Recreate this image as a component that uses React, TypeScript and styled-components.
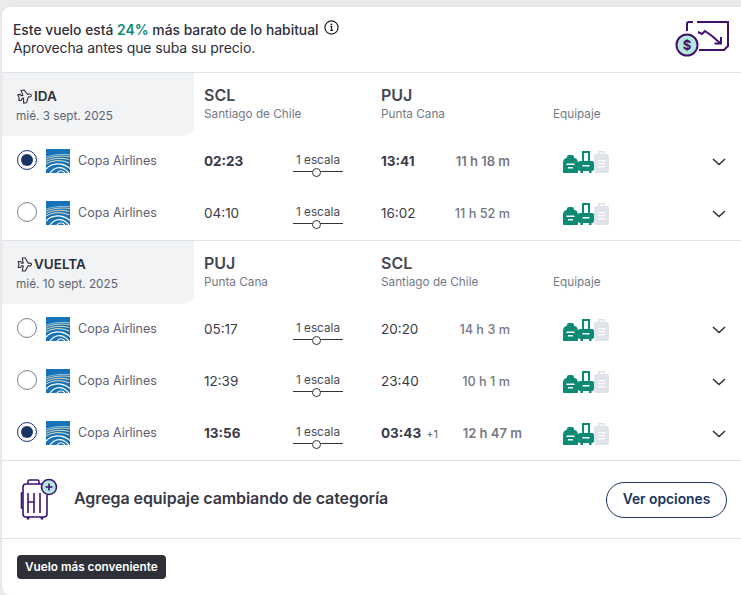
import React from "react";
import styled, { createGlobalStyle } from "styled-components";

const GlobalStyle = createGlobalStyle`
  html, body {
    margin: 0;
    padding: 0;
    background: #ebebeb;
    font-family: Inter, "Noto Sans", "Liberation Sans", sans-serif;
    color: #2d2e3a;
  }
  * { box-sizing: border-box; }
`;

const Page = styled.div`
  width: 741px;
  height: 595px;
  padding: 6px 0 0 1px;
  overflow: hidden;
`;

const Card = styled.div`
  background: #fff;
  height: 589px;
  border-radius: 8px 0 0 8px;
  border-top: 1px solid #e1e4ea;
  border-left: 1px solid #e1e4ea;
`;

const Banner = styled.div`
  height: 66px;
  display: flex;
  justify-content: space-between;
  padding: 14px 12px 0 11px;
  border-bottom: 1px solid #dfe3e9;
`;

const BannerTitle = styled.div`
  display: flex;
  align-items: flex-start;
  gap: 5px;
  font-size: 13.85px;
  line-height: 18px;
  font-weight: 500;
`;

const InfoSlot = styled.span`
  display: flex;
  margin-top: -1px;
`;

const Accent = styled.span`
  color: #0b8a75;
  font-weight: 600;
`;

const BannerSub = styled.div`
  font-size: 14px;
  line-height: 18px;
  letter-spacing: -0.1px;
`;

const Section = styled.section`
  border-bottom: 1px solid #dfe3e9;
`;

const Head = styled.div`
  display: flex;
  height: 63px;
`;

const Tab = styled.div`
  width: 192px;
  background: #f2f3f5;
  border-bottom-right-radius: 10px;
  padding: 14px 0 0 14px;
`;

const TabTitle = styled.div`
  display: flex;
  align-items: center;
  gap: 2px;
  margin-left: 1px;
  font-size: 13.5px;
  line-height: 18px;
  font-weight: 600;
`;

const TabDate = styled.div`
  margin-top: 3px;
  font-size: 11.75px;
  line-height: 16px;
  color: #5f6270;
`;

const Place = styled.div<{ $width: number; $inset?: number }>`
  width: ${(p) => p.$width}px;
  padding: 13px 0 0 ${(p) => p.$inset ?? 0}px;
`;

const Code = styled.div`
  font-size: 16px;
  line-height: 19px;
  font-weight: 600;
  color: #464753;
`;

const City = styled.div`
  margin-top: 1px;
  font-size: 11.75px;
  line-height: 16px;
  color: #757885;
`;

const Row = styled.div`
  display: flex;
  align-items: center;
  height: 52px;
  padding: 0 0 2px 15px;
`;

const Radio = styled.span<{ $checked?: boolean }>`
  width: 20px;
  height: 20px;
  margin-top: -2px;
  border-radius: 50%;
  border: 1px solid ${(p) => (p.$checked ? "#1b3361" : "#7d808c")};
  display: flex;
  align-items: center;
  justify-content: center;
  flex: none;
  &::after {
    content: "";
    display: ${(p) => (p.$checked ? "block" : "none")};
    width: 12px;
    height: 12px;
    border-radius: 50%;
    background: #1b3361;
  }
`;

const Carrier = styled.div`
  width: 167px;
  display: flex;
  align-items: center;
  gap: 8px;
  padding-left: 9px;
  font-size: 12.5px;
  color: #5f6270;
`;

const CarrierName = styled.span`
  margin-top: -2px;
`;

const Time = styled.div<{ $strong?: boolean }>`
  font-size: 13.5px;
  font-weight: ${(p) => (p.$strong ? 700 : 400)};
  color: #3a3b47;
`;

const DepartCell = styled.div`
  width: 89px;
`;

const Stops = styled.div`
  width: 88px;
  margin-top: 6px;
`;

const StopsLabel = styled.div`
  width: 50px;
  text-align: center;
  font-size: 11.75px;
  line-height: 14px;
  color: #4a4b57;
`;

const StopsLine = styled.div`
  width: 50px;
  height: 7px;
  margin-top: 1px;
  position: relative;
  &::before {
    content: "";
    position: absolute;
    left: 0;
    right: 0;
    top: 3px;
    height: 1px;
    background: #33343f;
  }
  &::after {
    content: "";
    position: absolute;
    left: 19px;
    top: 0;
    width: 7px;
    height: 7px;
    border-radius: 50%;
    background: #fff;
    border: 1px solid #33343f;
  }
`;

const ArriveCell = styled.div<{ $width: number }>`
  width: ${(p) => p.$width}px;
  display: flex;
  align-items: baseline;
`;

const DayShift = styled.span`
  margin-left: 5px;
  font-size: 11px;
  color: #5f6270;
`;

const Duration = styled.span<{ $strong?: boolean }>`
  margin-left: auto;
  font-size: ${(p) => (p.$strong ? 13 : 12.7)}px;
  font-weight: ${(p) => (p.$strong ? 600 : 500)};
  color: #757885;
`;

const Bags = styled.div<{ $offset: number }>`
  margin: 2px 0 0 ${(p) => p.$offset}px;
  width: 163px;
  height: 22px;
  display: flex;
  align-items: flex-end;
  color: #0b8a75;
`;

const ChevronSlot = styled.span`
  margin-left: auto;
  align-self: center;
  display: flex;
`;

const Upsell = styled.div`
  height: 78px;
  display: flex;
  align-items: center;
  padding: 0 14px 0 18px;
  border-bottom: 1px solid #dfe3e9;
`;

const UpsellText = styled.div`
  flex: 1;
  margin: 0 0 4px 16px;
  font-size: 16px;
  letter-spacing: -0.08px;
  font-weight: 600;
  color: #383945;
`;

const OutlineButton = styled.button`
  width: 121px;
  height: 36px;
  padding: 0 0 2px;
  border-radius: 18px;
  border: 1px solid #1b3361;
  background: #fff;
  color: #1b3361;
  font-family: inherit;
  font-size: 13.8px;
  font-weight: 600;
`;

const Footer = styled.div`
  padding: 16px 15px 0;
`;

const Tag = styled.span`
  display: inline-block;
  height: 24px;
  padding: 0 8px;
  border-radius: 4px;
  background: #2f3037;
  color: #fff;
  font-size: 11.75px;
  line-height: 24px;
  font-weight: 600;
`;

const PlaneSvg = styled.svg<{ $tilt: number }>`
  flex: none;
  transform: rotate(${(p) => p.$tilt}deg);
`;

const LogoSvg = styled.svg`
  flex: none;
`;

function InfoIcon() {
  return (
    <svg width="15" height="15" viewBox="0 0 15 15" fill="none" stroke="#1f2030">
      <circle cx="7.5" cy="7.5" r="6.6" strokeWidth="1.2" />
      <path d="M6.3 6.6h1.3v3.6M6.2 10.4h2.8" strokeWidth="1.2" />
      <circle cx="7.4" cy="4.4" r="0.9" fill="#1f2030" stroke="none" />
    </svg>
  );
}

function PlaneIcon({ tilt }: { tilt: number }) {
  return (
    <PlaneSvg
      $tilt={tilt}
      width="15"
      height="15"
      viewBox="0 0 15 15"
      fill="none"
      stroke="#2d2e3a"
      strokeWidth="1.1"
      strokeLinejoin="round"
    >
      <path d="M1.2 4.500h2.300l1.200 1.600h1.500L5.300 1h3L11 6.100h1.800c1 0 1.700.6 1.700 1.400s-.7 1.400-1.700 1.400H11L8.300 14h-3l.9-5.100H4.700l-1.200 1.600H1.200l.8-3z" />
    </PlaneSvg>
  );
}

function PriceDropIcon() {
  return (
    <svg width="54" height="36" viewBox="0 0 54 36" fill="none">
      <path
        d="M12 10V3C12 2 13 1 14 1h4M22 1h31v24l-4 4H24"
        stroke="#43106b"
        strokeWidth="2"
      />
      <path d="M23 11l4 2 3-3 7 5 8 7" stroke="#43106b" strokeWidth="2" />
      <path d="M46 16v6.500h-6.500" stroke="#43106b" strokeWidth="2" />
      <circle cx="12" cy="24" r="10.500" fill="#b2e8dd" stroke="#43106b" strokeWidth="2" />
      <text
        x="12"
        y="28.500"
        textAnchor="middle"
        fontSize="13"
        fontWeight="700"
        fill="#43106b"
        fontFamily="Inter, sans-serif"
      >
        $
      </text>
    </svg>
  );
}

function CopaLogo() {
  return (
    <LogoSvg width="24" height="24" viewBox="0 0 24 24">
      <rect width="24" height="24" fill="#1773b8" />
      <g fill="none" strokeWidth="1">
        <path d="M0 8C8 5.500 16 5 24 5.500" stroke="#8fbcd3" />
        <path d="M0 10C8 7 16 6.500 24 7.500" stroke="#c9d3c4" />
        <path d="M0 12.500C7 9 15 8.500 23 10.500" stroke="#e6d9b4" />
        <path d="M0 15C7 11 15 10.500 23 14" stroke="#e9e2c8" />
        <path d="M0 20C6 13.500 16 13 24 19.500" stroke="#fff" strokeWidth="1.200" />
        <path d="M4 24C9 17 17 16.500 23 24" stroke="#fff" strokeWidth="1.200" />
        <path d="M11 24C13 21 17 21 19 24" stroke="#fff" strokeWidth="1.200" />
      </g>
    </LogoSvg>
  );
}

function Backpack() {
  return (
    <svg width="15" height="18" viewBox="0 0 15 18" fill="currentColor">
      <path d="M0 17V8C0 4.500 2.500 3 4 2.800V2C4 .9 4.900 0 6 0h3c1.100 0 2 .9 2 2v.8c1.500.2 4 1.700 4 5.200v9c0 .6-.4 1-1 1H1c-.6 0-1-.4-1-1z" />
      <path d="M3.500 8.500h8V10h-8zM5 12h5v1.500H5z" fill="#fff" />
    </svg>
  );
}

function Trolley() {
  return (
    <svg width="16" height="22" viewBox="0 0 16 22" fill="currentColor">
      <path d="M4 0h8v10h-2V2H6v8H4z" />
      <path d="M2 10h12c1.100 0 2 .9 2 2v6c0 1.100-.9 2-2 2h-.5v2H11v-2H5v2H2.500v-2H2c-1.100 0-2-.9-2-2v-6c0-1.100.9-2 2-2z" />
      <path d="M4.500 14h7v1.500h-7z" fill="#fff" />
    </svg>
  );
}

function Suitcase() {
  return (
    <svg width="15" height="22" viewBox="0 0 15 22" fill="#e0e3e9">
      <path d="M4 0h7v3h2c1.100 0 2 .9 2 2v15c0 1.100-.9 2-2 2H2c-1.100 0-2-.9-2-2V5c0-1.100.9-2 2-2h2zm1.500 1.500V3h4V1.500z" />
      <path d="M4 9h7v1.200H4zM4 12h7v1.200H4zM4 15h7v1.200H4z" fill="#fff" />
    </svg>
  );
}

function Chevron() {
  return (
    <svg width="14" height="8" viewBox="0 0 14 8" fill="none" stroke="#2b2c38" strokeWidth="1.500">
      <path d="M1 1l6 5.500L13 1" />
    </svg>
  );
}

function LuggagePlus() {
  return (
    <svg width="38" height="44" viewBox="0 0 38 44" fill="none" stroke="#3c1272" strokeWidth="1.600">
      <path d="M8 6V3.500C8 2.500 8.600 2 9.500 2h8c.9 0 1.500.5 1.500 1.500V6" />
      <path d="M22 6H6C4 6 3 7 3 9v27c0 2 1 3 3 3h18c2 0 3-1 3-3V17" />
      <path d="M3 15H1.500v15H3M8 15v20M14 15v20M20 15v20M8 24h6" />
      <path d="M8 39v2.500M22 39v2.500" strokeWidth="2.600" />
      <circle cx="29" cy="9" r="7.500" fill="#b2e8dd" />
      <path d="M29 5.500v7M25.500 9h7" />
    </svg>
  );
}

type Flight = {
  depart: string;
  arrive: string;
  duration: string;
  selected?: boolean;
  dayShift?: string;
};

const outbound: Flight[] = [
  { depart: "02:23", arrive: "13:41", duration: "11 h 18 m", selected: true },
  { depart: "04:10", arrive: "16:02", duration: "11 h 52 m" },
];

const inbound: Flight[] = [
  { depart: "05:17", arrive: "20:20", duration: "14 h 3 m" },
  { depart: "12:39", arrive: "23:40", duration: "10 h 1 m" },
  { depart: "13:56", arrive: "03:43", duration: "12 h 47 m", selected: true, dayShift: "+1" },
];

function FlightRow({ flight }: { flight: Flight }) {
  const wide = Boolean(flight.dayShift);
  return (
    <Row>
      <Radio $checked={flight.selected} />
      <Carrier>
        <CopaLogo />
        <CarrierName>Copa Airlines</CarrierName>
      </Carrier>
      <DepartCell>
        <Time $strong={flight.selected}>{flight.depart}</Time>
      </DepartCell>
      <Stops>
        <StopsLabel>1 escala</StopsLabel>
        <StopsLine />
      </Stops>
      <ArriveCell $width={wide ? 141 : 129}>
        <Time $strong={flight.selected}>{flight.arrive}</Time>
        {flight.dayShift && <DayShift>{flight.dayShift}</DayShift>}
        <Duration $strong={flight.selected}>{flight.duration}</Duration>
      </ArriveCell>
      <Bags $offset={wide ? 41 : 53}>
        <Backpack />
        <Trolley />
        <Suitcase />
        <ChevronSlot>
          <Chevron />
        </ChevronSlot>
      </Bags>
    </Row>
  );
}

function Leg({
  title,
  date,
  tilt,
  from,
  fromCity,
  to,
  toCity,
  flights,
}: {
  title: string;
  date: string;
  tilt: number;
  from: string;
  fromCity: string;
  to: string;
  toCity: string;
  flights: Flight[];
}) {
  return (
    <Section>
      <Head>
        <Tab>
          <TabTitle>
            <PlaneIcon tilt={tilt} />
            {title}
          </TabTitle>
          <TabDate>{date}</TabDate>
        </Tab>
        <Place $width={187} $inset={10}>
          <Code>{from}</Code>
          <City>{fromCity}</City>
        </Place>
        <Place $width={172}>
          <Code>{to}</Code>
          <City>{toCity}</City>
        </Place>
        <Place $width={100}>
          <Code>&nbsp;</Code>
          <City>Equipaje</City>
        </Place>
      </Head>
      {flights.map((flight) => (
        <FlightRow key={flight.depart} flight={flight} />
      ))}
    </Section>
  );
}

export default function App() {
  return (
    <Page>
      <GlobalStyle />
      <Card>
        <Banner>
          <div>
            <BannerTitle>
              <span>
                Este vuelo está <Accent>24%</Accent> más barato de lo habitual
              </span>
              <InfoSlot>
                <InfoIcon />
              </InfoSlot>
            </BannerTitle>
            <BannerSub>Aprovecha antes que suba su precio.</BannerSub>
          </div>
          <PriceDropIcon />
        </Banner>
        <Leg
          title="IDA"
          date="mié. 3 sept. 2025"
          tilt={-12}
          from="SCL"
          fromCity="Santiago de Chile"
          to="PUJ"
          toCity="Punta Cana"
          flights={outbound}
        />
        <Leg
          title="VUELTA"
          date="mié. 10 sept. 2025"
          tilt={0}
          from="PUJ"
          fromCity="Punta Cana"
          to="SCL"
          toCity="Santiago de Chile"
          flights={inbound}
        />
        <Upsell>
          <LuggagePlus />
          <UpsellText>Agrega equipaje cambiando de categoría</UpsellText>
          <OutlineButton>Ver opciones</OutlineButton>
        </Upsell>
        <Footer>
          <Tag>Vuelo más conveniente</Tag>
        </Footer>
      </Card>
    </Page>
  );
}
